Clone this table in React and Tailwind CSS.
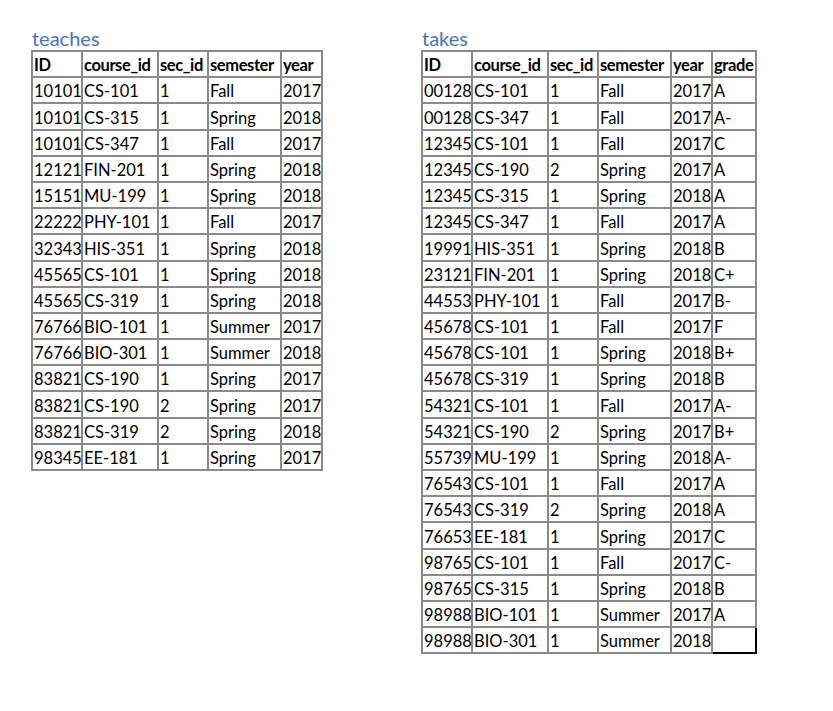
import React from "react"

const teaches = [
  ["10101", "CS-101", "1", "Fall", "2017"],
  ["10101", "CS-315", "1", "Spring", "2018"],
  ["10101", "CS-347", "1", "Fall", "2017"],
  ["12121", "FIN-201", "1", "Spring", "2018"],
  ["15151", "MU-199", "1", "Spring", "2018"],
  ["22222", "PHY-101", "1", "Fall", "2017"],
  ["32343", "HIS-351", "1", "Spring", "2018"],
  ["45565", "CS-101", "1", "Spring", "2018"],
  ["45565", "CS-319", "1", "Spring", "2018"],
  ["76766", "BIO-101", "1", "Summer", "2017"],
  ["76766", "BIO-301", "1", "Summer", "2018"],
  ["83821", "CS-190", "1", "Spring", "2017"],
  ["83821", "CS-190", "2", "Spring", "2017"],
  ["83821", "CS-319", "2", "Spring", "2018"],
  ["98345", "EE-181", "1", "Spring", "2017"],
]

const takes = [
  ["00128", "CS-101", "1", "Fall", "2017", "A"],
  ["00128", "CS-347", "1", "Fall", "2017", "A-"],
  ["12345", "CS-101", "1", "Fall", "2017", "C"],
  ["12345", "CS-190", "2", "Spring", "2017", "A"],
  ["12345", "CS-315", "1", "Spring", "2018", "A"],
  ["12345", "CS-347", "1", "Fall", "2017", "A"],
  ["19991", "HIS-351", "1", "Spring", "2018", "B"],
  ["23121", "FIN-201", "1", "Spring", "2018", "C+"],
  ["44553", "PHY-101", "1", "Fall", "2017", "B-"],
  ["45678", "CS-101", "1", "Fall", "2017", "F"],
  ["45678", "CS-101", "1", "Spring", "2018", "B+"],
  ["45678", "CS-319", "1", "Spring", "2018", "B"],
  ["54321", "CS-101", "1", "Fall", "2017", "A-"],
  ["54321", "CS-190", "2", "Spring", "2017", "B+"],
  ["55739", "MU-199", "1", "Spring", "2018", "A-"],
  ["76543", "CS-101", "1", "Fall", "2017", "A"],
  ["76543", "CS-319", "2", "Spring", "2018", "A"],
  ["76653", "EE-181", "1", "Spring", "2017", "C"],
  ["98765", "CS-101", "1", "Fall", "2017", "C-"],
  ["98765", "CS-315", "1", "Spring", "2018", "B"],
  ["98988", "BIO-101", "1", "Summer", "2017", "A"],
  ["98988", "BIO-301", "1", "Summer", "2018", ""],
]

const cell =
  "border-2 border-[#8a8a8a] h-[26.2px] px-[1px] py-0 text-left align-bottom leading-[22px] whitespace-nowrap overflow-hidden"

const DataTable = ({ title, headers, widths, width, rows, selectLast }) => (
  <div className="flex flex-col">
    <div className="text-[20px] leading-[22px] text-[#4a72c0] pl-[1px] mb-[1px]">{title}</div>
    <table className={"border-collapse border-2 border-[#7a7a7a] table-fixed text-[16.5px] text-black " + width}>
      <colgroup>
        {widths.map((w, i) => (
          <col key={i} className={w} />
        ))}
      </colgroup>
      <thead>
        <tr>
          {headers.map((h) => (
            <th key={h} className={cell + " font-bold tracking-[-0.4px]"}>
              {h}
            </th>
          ))}
        </tr>
      </thead>
      <tbody>
        {rows.map((r, ri) => (
          <tr key={ri}>
            {r.map((v, ci) => {
              const isSel = selectLast && ri === rows.length - 1 && ci === r.length - 1
              return (
                <td key={ci} className={isSel ? cell + " !border-black" : cell}>
                  {v}
                </td>
              )
            })}
          </tr>
        ))}
      </tbody>
    </table>
  </div>
)

export default function App() {
  return (
    <div className="w-[833px] h-[711px] bg-white flex items-start pl-[31px] pt-[27px] gap-[98px] font-['Lato',sans-serif]">
      <DataTable
        title="teaches"
        headers={["ID", "course_id", "sec_id", "semester", "year"]}
        widths={["w-[50px]", "w-[76px]", "w-[50px]", "w-[73px]", "w-[41px]"]}
        width="w-[291px]"
        rows={teaches}
      />
      <DataTable
        title="takes"
        headers={["ID", "course_id", "sec_id", "semester", "year", "grade"]}
        widths={["w-[50px]", "w-[76px]", "w-[50px]", "w-[73px]", "w-[41px]", "w-[44px]"]}
        width="w-[335px]"
        rows={takes}
        selectLast
      />
    </div>
  )
}
